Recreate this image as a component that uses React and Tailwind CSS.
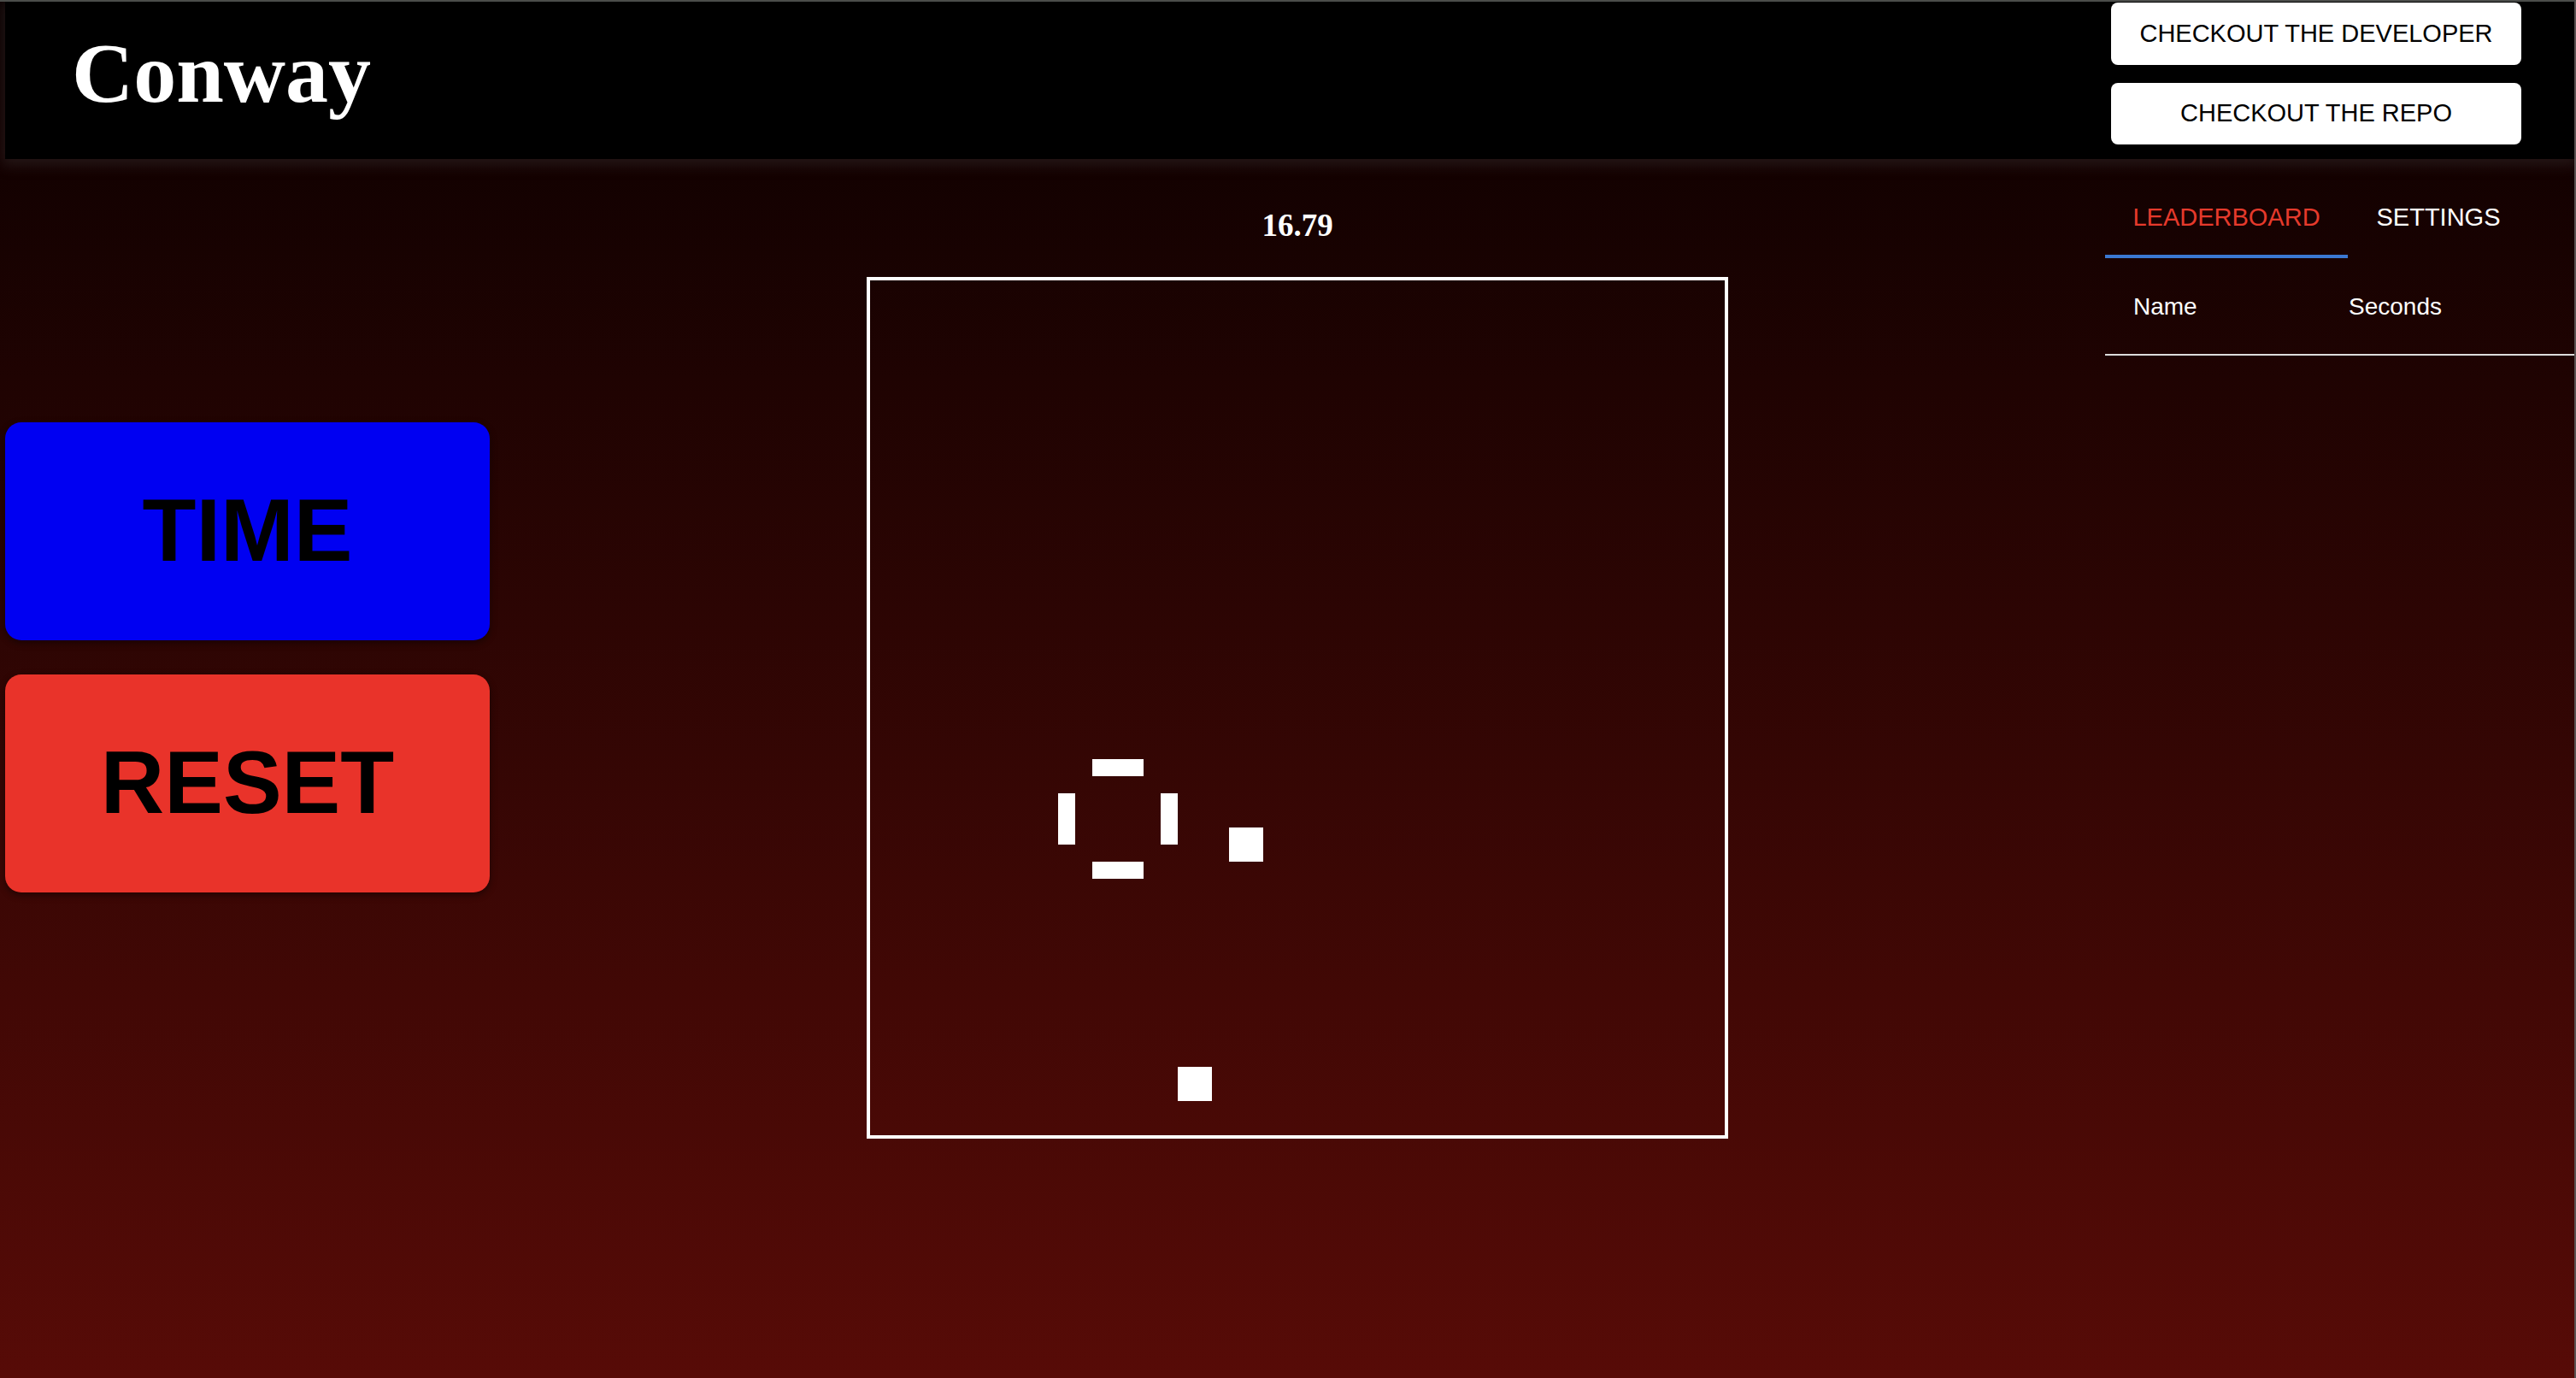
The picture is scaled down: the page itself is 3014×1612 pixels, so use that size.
import { useState } from "react";

const CELLS = [
  [13, 28], [14, 28], [15, 28],
  [11, 30], [11, 31], [11, 32],
  [17, 30], [17, 31], [17, 32],
  [13, 34], [14, 34], [15, 34],
  [21, 32], [22, 32], [21, 33], [22, 33],
  [18, 46], [19, 46], [18, 47], [19, 47],
];

const sans = "font-['Liberation_Sans',Arial,sans-serif]";
const serif = "font-['Liberation_Serif','Times_New_Roman',serif]";

function Header() {
  return (
    <header className="ml-[6px] flex h-[184px] items-start justify-between bg-black shadow-[0_4px_14px_4px_rgba(70,60,60,0.35)]">
      <h1 className={`${serif} ml-[78px] mt-[34px] text-[100px] font-bold leading-none text-white`}>
        Conway
      </h1>
      <div className="mr-[62px] mt-[1px] flex flex-col gap-[21px]">
        <button className={`${sans} h-[73px] w-[480px] rounded-[8px] bg-white text-[29px] text-black`}>
          CHECKOUT THE DEVELOPER
        </button>
        <button className={`${sans} h-[72px] w-[480px] rounded-[8px] bg-white text-[29px] text-black`}>
          CHECKOUT THE REPO
        </button>
      </div>
    </header>
  );
}

function Board() {
  return (
    <div className="h-[1008px] w-[1008px] border-4 border-white">
      <div className="grid h-[1000px] w-[1000px] grid-cols-[repeat(50,20px)] grid-rows-[repeat(50,20px)]">
        {CELLS.map(([c, r]) => (
          <div
            key={`${c}-${r}`}
            className="bg-white"
            style={{ gridColumnStart: c + 1, gridRowStart: r + 1 }}
          />
        ))}
      </div>
    </div>
  );
}

function SidePanel() {
  const [tab, setTab] = useState(0);
  return (
    <aside className={`${sans} ml-auto w-[549px] pt-[20px]`}>
      <div className="flex h-[96px]">
        <button
          onClick={() => setTab(0)}
          className={`flex w-[284px] items-center justify-center border-b-4 pt-[4px] text-[29px] leading-[30px] ${tab === 0 ? "border-[#3b78d2] text-[#e53a2c]" : "border-transparent text-white"}`}
        >
          LEADERBOARD
        </button>
        <button
          onClick={() => setTab(1)}
          className={`flex w-[212px] items-center justify-center border-b-4 pt-[4px] text-[29px] leading-[30px] ${tab === 1 ? "border-[#3b78d2] text-[#e53a2c]" : "border-transparent text-white"}`}
        >
          SETTINGS
        </button>
      </div>
      <div className="grid h-[114px] grid-cols-[252px_1fr] items-center border-b-2 border-[#dcdcdc] pt-[2px] text-[28px] text-white">
        <span className="pl-[33px]">Name</span>
        <span className="pl-[33px]">Seconds</span>
      </div>
    </aside>
  );
}

export default function App() {
  return (
    <div className="h-[1612px] w-full overflow-hidden border-t-2 border-r-2 border-t-[#4b4d4a] border-r-[#5a5252] bg-[linear-gradient(to_bottom,#0a0000,#570b07)]">
      <Header />
      <main className="flex">
        <div className="flex w-[1014px] flex-col gap-[40px] pl-[6px] pt-[308px]">
          <button className={`${sans} h-[255px] w-[567px] rounded-[19px] bg-[#0000f2] text-[103px] font-bold text-black shadow-[0_3px_8px_rgba(0,0,0,0.45)]`}>
            TIME
          </button>
          <button className={`${sans} h-[255px] w-[567px] rounded-[19px] bg-[#e9332a] text-[103px] font-bold text-black shadow-[0_3px_8px_rgba(0,0,0,0.45)]`}>
            RESET
          </button>
        </div>
        <div className="flex w-[1008px] flex-col items-center pt-[59px]">
          <div className={`${serif} h-[38px] text-[37px] font-bold leading-[38px] text-white`}>16.79</div>
          <div className="mt-[41px]">
            <Board />
          </div>
        </div>
        <SidePanel />
      </main>
    </div>
  );
}
